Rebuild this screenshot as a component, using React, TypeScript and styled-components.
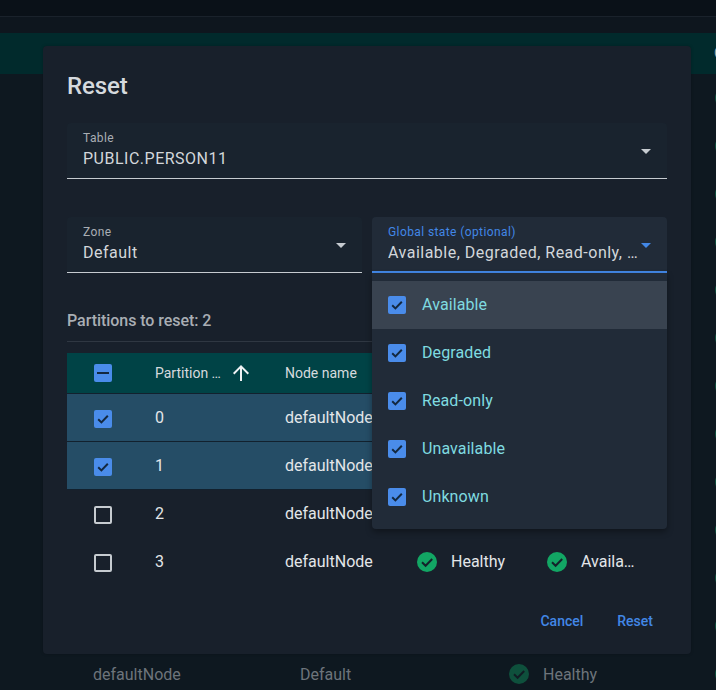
import React from "react";
import styled, { createGlobalStyle } from "styled-components";

const Global = createGlobalStyle`
  html, body { margin: 0; padding: 0; background: #0c1820; }
  body { font-family: Roboto, "Liberation Sans", sans-serif; }
  * { box-sizing: border-box; }
`;

const Page = styled.div`
  position: relative;
  width: 716px;
  height: 690px;
  overflow: hidden;
  background: #0c1820;
  display: flex;
  flex-direction: column;
`;
const TopBar = styled.div`
  height: 17px;
  flex: none;
  background: #0a1118;
  border-bottom: 1px solid #1a222b;
`;
const SubBar = styled.div`
  height: 16px;
  flex: none;
  background: #0e161e;
`;
const TealBand = styled.div`
  height: 41px;
  flex: none;
  background: #012a2c;
  padding-left: 714px;
  font-size: 14px;
  line-height: 41px;
  color: #a4adb0;
  white-space: nowrap;
`;
const BackRow = styled.div`
  height: 48px;
  flex: none;
  display: grid;
  grid-template-columns: 207px 208px 35px 171px 34px;
  align-items: center;
  padding-left: 93px;
  color: #6d747b;
  font-size: 16px;
  background: #0e1820;
`;
const BackIcon = styled.span`
  display: flex;
  opacity: 0.42;
`;

const Dialog = styled.div`
  position: absolute;
  left: 43px;
  top: 46px;
  width: 648px;
  height: 608px;
  background: #18202b;
  border-radius: 4px;
  padding: 24px 24px 21px;
  display: flex;
  flex-direction: column;
  box-shadow: 0 0 3px rgba(0, 0, 0, 0.25);
`;
const Title = styled.h2`
  margin: 0;
  font-size: 24px;
  line-height: 32px;
  font-weight: 500;
  letter-spacing: -0.1px;
  color: #d5d9de;
`;
const SelectBox = styled.div<{ $focused?: boolean }>`
  position: relative;
  height: 56px;
  background: ${(p) => (p.$focused ? "#212b38" : "#19232e")};
  border-radius: 4px 4px 0 0;
  border-bottom: ${(p) => (p.$focused ? "2px solid #4287e6" : "1px solid #c6cbd0")};
  padding: 8px 28px 0 16px;
`;
const SelectLabel = styled.div<{ $focused?: boolean }>`
  font-size: 12px;
  line-height: 14px;
  letter-spacing: 0.4px;
  color: ${(p) => (p.$focused ? "#4287e6" : "#a9aeb4")};
`;
const SelectValue = styled.div`
  margin-top: 2px;
  font-size: 16px;
  line-height: 24px;
  letter-spacing: 0.5px;
  color: #d3d7db;
  white-space: nowrap;
  overflow: hidden;
  text-overflow: ellipsis;
`;
const Caret = styled.span<{ $focused?: boolean }>`
  position: absolute;
  right: 16px;
  top: 26px;
  width: 0;
  height: 0;
  border-left: 5px solid transparent;
  border-right: 5px solid transparent;
  border-top: 5px solid ${(p) => (p.$focused ? "#4287e6" : "#c6cbd0")};
`;
const TableField = styled.div`
  margin-top: 21px;
`;
const FieldRow = styled.div`
  margin-top: 38px;
  display: grid;
  grid-template-columns: 295px 295px;
  gap: 10px;
`;
const CountLine = styled.div`
  margin-top: 37px;
  height: 32px;
  font-size: 16px;
  line-height: 22px;
  font-weight: 500;
  letter-spacing: -0.05px;
  color: #a9aeb4;
  border-bottom: 1px solid #2f3742;
`;
const TableWrap = styled.div`
  margin-top: 11px;
  display: flex;
  flex-direction: column;
`;
const Row = styled.div<{ $selected?: boolean; $head?: boolean }>`
  display: grid;
  grid-template-columns: 88px 130px 132px 130px 1fr;
  align-items: center;
  height: ${(p) => (p.$head ? "41px" : "48px")};
  background: ${(p) => (p.$head ? "#004346" : p.$selected ? "#254d66" : "transparent")};
  border-bottom: 1px solid ${(p) => (p.$head || p.$selected ? "#12212e" : "transparent")};
  color: #e3e6e9;
  font-size: 16px;
  font-weight: 400;
`;
const CheckCell = styled.div<{ $head?: boolean }>`
  display: flex;
  padding-left: 27px;
  padding-top: ${(p) => (p.$head ? "0" : "3px")};
`;
const HeadText = styled.div`
  display: flex;
  align-items: center;
  font-size: 14px;
  font-weight: 400;
  color: #d6dade;
  gap: 8px;
`;
const Cell = styled.div`
  white-space: nowrap;
`;
const StatusCell = styled.div`
  display: flex;
  align-items: center;
  gap: 13px;
  margin-left: -1px;
  white-space: nowrap;
`;
const Actions = styled.div`
  margin-top: auto;
  display: flex;
  justify-content: flex-end;
  gap: 34px;
  padding-right: 14px;
`;
const ActionButton = styled.button`
  background: none;
  border: 0;
  padding: 0;
  font-family: inherit;
  font-size: 14px;
  line-height: 24px;
  font-weight: 500;
  color: #4287e6;
`;
const Menu = styled.div`
  position: absolute;
  left: 372px;
  top: 273px;
  width: 295px;
  height: 256px;
  padding: 8px 0;
  background: #212b38;
  border-radius: 0 0 4px 4px;
  box-shadow: 0 3px 6px rgba(0, 0, 0, 0.35);
`;
const MenuItem = styled.div<{ $active?: boolean }>`
  height: 48px;
  display: flex;
  align-items: center;
  gap: 16px;
  padding-left: 16px;
  font-size: 16px;
  letter-spacing: 0.1px;
  color: #7fdbe0;
  background: ${(p) => (p.$active ? "#394350" : "transparent")};
`;
const MenuLabel = styled.span`
  padding-bottom: 2px;
`;

const Box = styled.span<{ $on?: boolean }>`
  width: 18px;
  height: 18px;
  flex: none;
  border-radius: 2px;
  display: flex;
  align-items: center;
  justify-content: center;
  background: ${(p) => (p.$on ? "#4a8cea" : "transparent")};
  border: ${(p) => (p.$on ? "none" : "2px solid #c6cbd0")};
`;

function Check({ state }: { state?: "on" | "mixed" }) {
  return (
    <Box $on={!!state}>
      {state === "on" && (
        <svg width="14" height="14" viewBox="0 0 14 14" fill="none">
          <path d="M2.2 7.3 5.4 10.4 11.8 3.8" stroke="#13283f" strokeWidth="2" />
        </svg>
      )}
      {state === "mixed" && (
        <svg width="14" height="14" viewBox="0 0 14 14" fill="none">
          <path d="M1 7H13" stroke="#13283f" strokeWidth="2" />
        </svg>
      )}
    </Box>
  );
}

function Ok({ dim }: { dim?: boolean }) {
  return (
    <svg width="22" height="22" viewBox="0 0 22 22" fill="none">
      <circle cx="11" cy="11" r="10" fill={dim ? "#0f9d63" : "#12a664"} />
      <path d="M6 11.2 9.6 14.8 16.2 8" stroke="#14232a" strokeWidth="2" fill="none" />
    </svg>
  );
}

function ArrowUp() {
  return (
    <svg width="24" height="24" viewBox="0 0 24 24" fill="none">
      <path d="M4 12 5.4 13.4 11 7.8V20H13V7.8L18.6 13.4 20 12 12 4Z" fill="#f0f2f4" />
    </svg>
  );
}

const rows = [0, 1, 2, 3];
const backRows = Array.from({ length: 13 }, (_, i) => i);
const menuItems = ["Available", "Degraded", "Read-only", "Unavailable", "Unknown"];

export default function App() {
  return (
    <>
      <Global />
      <Page>
        <TopBar />
        <SubBar />
        <TealBand>C</TealBand>
        {backRows.map((i) => {
          const visible = i === backRows.length - 1;
          return (
            <BackRow key={i}>
              <span>{visible && "defaultNode"}</span>
              <span>{visible && "Default"}</span>
              <BackIcon>{visible && <Ok dim />}</BackIcon>
              <span>{visible && "Healthy"}</span>
              <BackIcon>
                <Ok dim />
              </BackIcon>
            </BackRow>
          );
        })}
        <Dialog>
          <Title>Reset</Title>
          <TableField>
            <SelectBox>
              <SelectLabel>Table</SelectLabel>
              <SelectValue>PUBLIC.PERSON11</SelectValue>
              <Caret />
            </SelectBox>
          </TableField>
          <FieldRow>
            <SelectBox>
              <SelectLabel>Zone</SelectLabel>
              <SelectValue>Default</SelectValue>
              <Caret />
            </SelectBox>
            <SelectBox $focused>
              <SelectLabel $focused>Global state (optional)</SelectLabel>
              <SelectValue>Available, Degraded, Read-only, Unavailable, Unknown</SelectValue>
              <Caret $focused />
            </SelectBox>
          </FieldRow>
          <CountLine>Partitions to reset: 2</CountLine>
          <TableWrap>
            <Row $head>
              <CheckCell $head>
                <Check state="mixed" />
              </CheckCell>
              <HeadText>
                Partition …
                <ArrowUp />
              </HeadText>
              <HeadText>Node name</HeadText>
            </Row>
            {rows.map((r) => (
              <Row key={r} $selected={r < 2}>
                <CheckCell>
                  <Check state={r < 2 ? "on" : undefined} />
                </CheckCell>
                <Cell>{r}</Cell>
                <Cell>defaultNode</Cell>
                {r === 3 && (
                  <StatusCell>
                    <Ok />
                    Healthy
                  </StatusCell>
                )}
                {r === 3 && (
                  <StatusCell>
                    <Ok />
                    Availa…
                  </StatusCell>
                )}
              </Row>
            ))}
          </TableWrap>
          <Actions>
            <ActionButton>Cancel</ActionButton>
            <ActionButton>Reset</ActionButton>
          </Actions>
        </Dialog>
        <Menu>
          {menuItems.map((m, i) => (
            <MenuItem key={m} $active={i === 0}>
              <Check state="on" />
              <MenuLabel>{m}</MenuLabel>
            </MenuItem>
          ))}
        </Menu>
      </Page>
    </>
  );
}
